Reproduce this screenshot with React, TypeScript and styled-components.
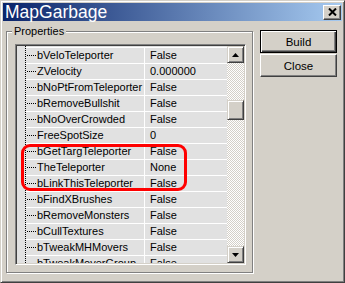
import * as React from 'react';
import styled, { createGlobalStyle } from 'styled-components';

const GlobalStyle = createGlobalStyle`
  html, body {
    margin: 0;
    padding: 0;
    background: #d4d0c8;
  }
  body {
    font-family: "Liberation Sans", Arial, sans-serif;
    font-size: 11px;
    color: #000;
  }
`;

const Window = styled.div`
  position: relative;
  box-sizing: border-box;
  width: 345px;
  height: 283px;
  padding: 2px;
  background: #d4d0c8;
  border: 1px solid;
  border-color: #d4d0c8 #404040 #404040 #d4d0c8;
  box-shadow: inset 1px 1px #fff, inset -1px -1px #808080;
  display: flex;
  flex-direction: column;
`;

const TitleBar = styled.div`
  height: 18px;
  flex: none;
  display: flex;
  align-items: center;
  padding-left: 2px;
  background: linear-gradient(to right, #0a246a, #a6caf0);
  color: #fff;
  font-size: 17.5px;
  line-height: 18px;
`;

const TitleText = styled.span`
  flex: 1;
  white-space: nowrap;
`;

const CloseBox = styled.div`
  flex: none;
  box-sizing: border-box;
  width: 18px;
  height: 15px;
  margin-right: 1px;
  display: flex;
  align-items: center;
  justify-content: center;
  background: #d4d0c8;
  border: 1px solid;
  border-color: #fff #404040 #404040 #fff;
  box-shadow: inset -1px -1px #808080;
`;

const Body = styled.div`
  flex: 1;
  display: flex;
  align-items: flex-start;
  padding: 9px 0 0 3px;
`;

const GroupBox = styled.div`
  box-sizing: border-box;
  width: 247px;
  height: 242px;
  margin-top: 1px;
  padding: 0 5px 5px 8px;
  border: 1px solid #808080;
  box-shadow: inset 1px 1px #fff, 1px 1px #fff;
  display: flex;
  flex-direction: column;
`;

const GroupLabel = styled.div`
  align-self: flex-start;
  margin: -7px 0 0 -3px;
  padding: 0 2px;
  line-height: 13px;
  background: #d4d0c8;
`;

const ListBox = styled.div`
  box-sizing: border-box;
  width: 231px;
  height: 221px;
  margin-top: 6px;
  padding: 1px;
  display: flex;
  background: #e1e1e1;
  border: 1px solid;
  border-color: #808080 #fff #fff #808080;
  box-shadow: inset 1px 1px #404040, inset -1px -1px #d4d0c8;
`;

const Gutter = styled.div`
  flex: none;
  width: 9px;
  background: repeating-linear-gradient(to bottom, #000 0 1px, transparent 1px 2px) right top / 1px 100% no-repeat;
`;

const Rows = styled.div`
  flex: 1;
  min-width: 0;
  overflow: hidden;
  padding-top: 1px;
`;

const Row = styled.div`
  box-sizing: border-box;
  height: 16px;
  display: grid;
  grid-template-columns: 118px 1px 1fr;
  border-top: 1px solid #fff;
  line-height: 15px;
`;

const NameCell = styled.div`
  display: flex;
  align-items: center;
  overflow: hidden;
  white-space: nowrap;
`;

const Branch = styled.span`
  flex: none;
  width: 9px;
  height: 1px;
  margin: 0 1px;
  background: repeating-linear-gradient(to right, #000 0 1px, transparent 1px 2px);
`;

const Divider = styled.div`
  background: #fff;
`;

const ValueCell = styled.div`
  padding-left: 5px;
  white-space: nowrap;
  overflow: hidden;
`;

const ScrollBar = styled.div`
  flex: none;
  width: 17px;
  display: flex;
  flex-direction: column;
  background-color: #fff;
  background-image: repeating-conic-gradient(#d4d0c8 0 25%, #fff 0 50%);
  background-size: 2px 2px;
`;

const Raised = styled.div<{ $height: number }>`
  flex: none;
  box-sizing: border-box;
  height: ${p => p.$height}px;
  display: flex;
  align-items: center;
  justify-content: center;
  background: #d4d0c8;
  border: 1px solid;
  border-color: #d4d0c8 #404040 #404040 #d4d0c8;
  box-shadow: inset 1px 1px #fff, inset -1px -1px #808080;
`;

const Track = styled.div`
  flex: 1;
`;

const Thumb = styled(Raised)`
  margin-top: 37px;
`;

const Buttons = styled.div`
  margin-left: 7px;
  display: flex;
  flex-direction: column;
  gap: 1px;
`;

const Button = styled.div<{ $default?: boolean }>`
  box-sizing: border-box;
  width: 77px;
  height: 23px;
  display: flex;
  align-items: center;
  justify-content: center;
  background: #d4d0c8;
  font-size: 11.5px;
  border: 1px solid;
  border-color: ${p => (p.$default ? '#000' : '#fff #404040 #404040 #fff')};
  box-shadow: ${p =>
    p.$default
      ? 'inset 1px 1px #fff, inset -1px -1px #404040, inset -2px -2px #808080'
      : 'inset -1px -1px #808080'};
`;

const Highlight = styled.div`
  position: absolute;
  left: 20px;
  top: 143px;
  width: 166px;
  height: 47px;
  box-sizing: border-box;
  border: 3px solid #ff0000;
  border-radius: 9px;
`;

const Arrow = ({ down }: { down?: boolean }) => (
  <svg width="7" height="4" viewBox="0 0 7 4">
    <polygon points={down ? '0,0 7,0 3.5,4' : '3.5,0 7,4 0,4'} fill="#000" />
  </svg>
);

const rows: [string, string][] = [
  ['bVeloTeleporter', 'False'],
  ['ZVelocity', '0.000000'],
  ['bNoPtFromTeleporter', 'False'],
  ['bRemoveBullshit', 'False'],
  ['bNoOverCrowded', 'False'],
  ['FreeSpotSize', '0'],
  ['bGetTargTeleporter', 'False'],
  ['TheTeleporter', 'None'],
  ['bLinkThisTeleporter', 'False'],
  ['bFindXBrushes', 'False'],
  ['bRemoveMonsters', 'False'],
  ['bCullTextures', 'False'],
  ['bTweakMHMovers', 'False'],
  ['bTweakMoverGroup', 'False'],
];

export default function App() {
  return (
    <>
      <GlobalStyle />
      <Window>
        <TitleBar>
          <TitleText>MapGarbage</TitleText>
          <CloseBox>
            <svg width="9" height="8" viewBox="0 0 9 8">
              <path d="M1 0.5 L8 7.5 M8 0.5 L1 7.5" stroke="#000" strokeWidth="2" />
            </svg>
          </CloseBox>
        </TitleBar>
        <Body>
          <GroupBox>
            <GroupLabel>Properties</GroupLabel>
            <ListBox>
              <Gutter />
              <Rows>
                {rows.map(([name, value]) => (
                  <Row key={name}>
                    <NameCell>
                      <Branch />
                      {name}
                    </NameCell>
                    <Divider />
                    <ValueCell>{value}</ValueCell>
                  </Row>
                ))}
              </Rows>
              <ScrollBar>
                <Raised $height={17}>
                  <Arrow />
                </Raised>
                <Track>
                  <Thumb $height={20} />
                </Track>
                <Raised $height={17}>
                  <Arrow down />
                </Raised>
              </ScrollBar>
            </ListBox>
          </GroupBox>
          <Buttons>
            <Button $default>Build</Button>
            <Button>Close</Button>
          </Buttons>
        </Body>
        <Highlight />
      </Window>
    </>
  );
}
